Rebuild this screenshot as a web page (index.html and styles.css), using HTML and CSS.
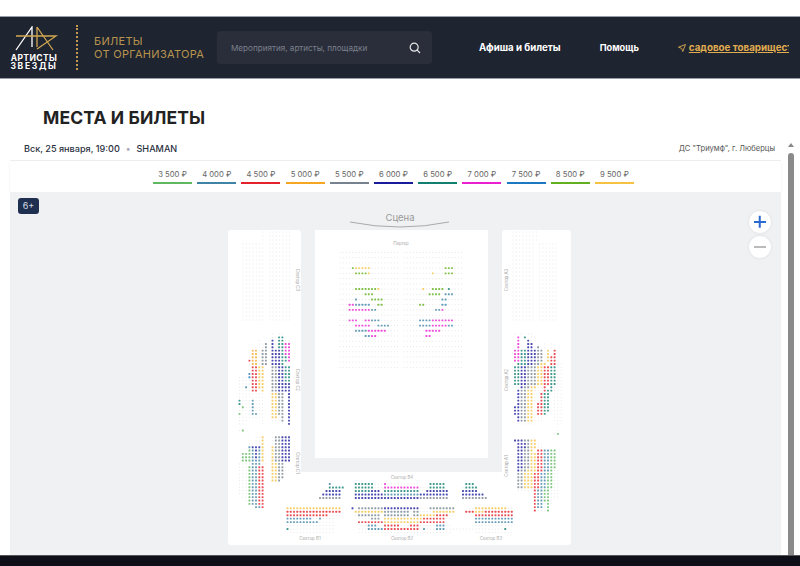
FILE: index.html
```html
<!DOCTYPE html>
<html>
<head>
    <title>Места и билеты</title>
    <link rel="stylesheet" href="styles.css">
</head>
<body>
    <header class="header">
        <div class="logo">
            <svg class="logo-mark" width="44" height="26" viewBox="0 0 44 26">
                <path d="M1 24 L17 1 L17 21" class="logo-white"/>
                <path d="M1 10 H41 L22 23 M22 1 L38 24 M22 1 V21" class="logo-gold"/>
            </svg>
            <div class="logo-text">АРТИСТЫ</div>
            <div class="logo-text logo-text-wide">ЗВЕЗДЫ</div>
        </div>
        <div class="divider"></div>
        <div class="tagline">БИЛЕТЫ<br>ОТ ОРГАНИЗАТОРА</div>
        <div class="search">
            <span>Мероприятия, артисты, площадки</span>
            <svg width="12" height="12" viewBox="0 0 12 12">
                <circle cx="5.2" cy="5.2" r="4" class="icon-line"/>
                <path d="M8.2 8.2 L11 11" class="icon-line"/>
            </svg>
        </div>
        <nav class="nav">
            <a class="nav-posters">Афиша и билеты</a>
            <a class="nav-help">Помощь</a>
        </nav>
        <div class="city">
            <svg width="8" height="8" viewBox="0 0 8 8">
                <path d="M7.5 .5 L.5 3.2 L3.6 4.4 L4.8 7.5 Z" class="icon-gold"/>
            </svg>
            <a>садовое товарищество</a>
        </div>
    </header>

    <h1 class="title">МЕСТА И БИЛЕТЫ</h1>

    <section class="panel">
        <div class="panel-main">
            <div class="event">
                <div class="event-info">
                    <span>Вск, 25 января, 19:00</span>
                    <span class="event-dot">•</span>
                    <span>SHAMAN</span>
                </div>
                <div class="event-place">ДС "Триумф", г. Люберцы</div>
            </div>
            <div class="prices">
                <div class="price price-3500">3 500 ₽</div>
                <div class="price price-4000">4 000 ₽</div>
                <div class="price price-4500">4 500 ₽</div>
                <div class="price price-5000">5 000 ₽</div>
                <div class="price price-5500">5 500 ₽</div>
                <div class="price price-6000">6 000 ₽</div>
                <div class="price price-6500">6 500 ₽</div>
                <div class="price price-7000">7 000 ₽</div>
                <div class="price price-7500">7 500 ₽</div>
                <div class="price price-8500">8 500 ₽</div>
                <div class="price price-9500">9 500 ₽</div>
            </div>
            <div class="map">
                <svg id="hall" class="hall" width="771" height="363" viewBox="10 192 771 363"></svg>
                <div class="age">6+</div>
                <div class="zoom-buttons">
                    <div class="zoom-button zoom-plus"></div>
                    <div class="zoom-button zoom-minus"></div>
                </div>
            </div>
        </div>
        <div class="scrollbar">
            <div class="scroll-arrow"></div>
            <div class="scroll-thumb"></div>
        </div>
    </section>

    <div class="bottom-bar"></div>

    <script src="script.js"></script>
</body>
</html>
```

FILE: styles.css
```css
body {
    margin: 0;
    padding-top: 16px;
    width: 800px;
    height: 550px;
    overflow: hidden;
    background: #fff;
    font-family: Inter, "Liberation Sans", sans-serif;
    color: #222;
}

/* header */
.header {
    display: flex;
    align-items: center;
    height: 61px;
    background: #1f2431;
    border-top: 1px solid #9a9da5;
    border-bottom: 1px solid #9a9da5;
    box-sizing: content-box;
    margin-bottom: 29px;
    overflow: hidden;
}
.logo {
    width: 48px;
    margin-left: 10px;
    text-align: center;
}
.logo-mark {
    display: block;
    margin: 0 0 2px 5px;
}
.logo-white, .logo-gold {
    fill: none;
    stroke-width: 1.3;
}
.logo-white {
    stroke: #fff;
}
.logo-gold {
    stroke: #d0a650;
}
.logo-text {
    font-size: 8.5px;
    line-height: 8px;
    font-weight: 700;
    letter-spacing: .4px;
    color: #fff;
    white-space: nowrap;
}
.logo-text-wide {
    letter-spacing: 1.7px;
}
.divider {
    height: 45px;
    margin-left: 18px;
    border-left: 2px dotted #c39a4e;
}
.tagline {
    margin-left: 16px;
    width: 123px;
    font-size: 11px;
    line-height: 13px;
    color: #b8954f;
    letter-spacing: .3px;
    white-space: nowrap;
}
.search {
    display: flex;
    align-items: center;
    justify-content: space-between;
    width: 215px;
    height: 33px;
    padding: 0 11px 0 14px;
    box-sizing: border-box;
    background: #2a2e3b;
    border-radius: 4px;
    font-size: 8.15px;
    color: #7c808b;
}
.icon-line {
    fill: none;
    stroke: #e6e6e6;
    stroke-width: 1.2;
}
.icon-gold {
    fill: none;
    stroke: #c9a04f;
    stroke-width: 1;
}
.nav {
    display: flex;
    margin-left: 47px;
    font-size: 9.7px;
    font-weight: 700;
    color: #fff;
    white-space: nowrap;
}
.nav-help {
    margin-left: 39px;
    font-size: 9.2px;
}
.city {
    display: flex;
    align-items: center;
    gap: 3px;
    width: 111px;
    margin-left: 39px;
    overflow: hidden;
    font-size: 9.8px;
    font-weight: 700;
    color: #e0ac50;
    white-space: nowrap;
}
.city svg {
    flex: none;
}
.city a {
    text-decoration: underline;
}

.title {
    margin: 1px 0 9px 43px;
    height: 20px;
    font-size: 17.5px;
    line-height: 20px;
    font-weight: 700;
    letter-spacing: .1px;
}

/* seat panel */
.panel {
    display: flex;
    height: 418px;
}
.panel-main {
    width: 771px;
    margin-left: 10px;
}
.event {
    display: flex;
    align-items: center;
    justify-content: space-between;
    height: 23px;
    padding: 0 6px 0 14px;
    border-bottom: 1px solid #eee;
    font-size: 9.1px;
}
.event-dot {
    margin: 0 3.5px;
    color: #aab;
}
.event-info {
    font-weight: 500;
    color: #2a3040;
}
.event-place {
    font-size: 7.6px;
    color: #555;
}
.prices {
    display: flex;
    justify-content: center;
    gap: 5.2px;
    height: 31px;
    padding-right: 4px;
    box-shadow: 0 1px 2px rgba(0, 0, 0, .08);
    position: relative;
}
.price {
    width: 39px;
    height: 15px;
    margin-top: 8px;
    box-sizing: border-box;
    font-size: 7.7px;
    line-height: 12px;
    text-align: center;
    color: #666;
    border-bottom: 2px solid #999;
}
.price-3500 { border-color: #5fb760; }
.price-4000 { border-color: #3f83a5; }
.price-4500 { border-color: #e3222b; }
.price-5000 { border-color: #f5a623; }
.price-5500 { border-color: #76838f; }
.price-6000 { border-color: #1a1a9c; }
.price-6500 { border-color: #128070; }
.price-7000 { border-color: #ea1fd0; }
.price-7500 { border-color: #1c78c0; }
.price-8500 { border-color: #62b01f; }
.price-9500 { border-color: #f5c242; }

.map {
    position: relative;
    height: 363px;
    background: #f0f1f3;
}
.hall {
    display: block;
}
.plate {
    fill: #fff;
}
.stage-line {
    fill: none;
    stroke: #aaa;
    stroke-width: 1;
}
.stage-text {
    font-size: 9.5px;
    fill: #999;
    text-anchor: middle;
}
.sector-text {
    font-size: 4.4px;
    fill: #aaa;
    text-anchor: middle;
}
.age {
    position: absolute;
    left: 8px;
    top: 6px;
    width: 21px;
    height: 16px;
    border-radius: 3px;
    background: #1f2f4f;
    color: #d8dce6;
    font-size: 9px;
    line-height: 16px;
    text-align: center;
}
.zoom-buttons {
    position: absolute;
    left: 739px;
    top: 19px;
    display: flex;
    flex-direction: column;
    gap: 3px;
}
.zoom-button {
    position: relative;
    width: 22px;
    height: 22px;
    border-radius: 50%;
    background: #fff;
    box-shadow: 0 0 3px rgba(0, 0, 0, .1);
}
.zoom-button::before, .zoom-plus::after {
    content: "";
    position: absolute;
    left: 5px;
    top: 10px;
    width: 12px;
    height: 1.5px;
    background: #2a6ad0;
}
.zoom-plus::after {
    transform: rotate(90deg);
}
.zoom-minus::before {
    background: #bbb;
}

.scrollbar {
    width: 19px;
    display: flex;
    flex-direction: column;
    align-items: center;
}
.scroll-arrow {
    margin-top: 6px;
    border-left: 3px solid transparent;
    border-right: 3px solid transparent;
    border-bottom: 4px solid #888;
}
.scroll-thumb {
    width: 6px;
    height: 402px;
    margin-top: 6px;
    border-radius: 3px 3px 0 0;
    background: #8a8a8a;
}

.bottom-bar {
    height: 11px;
    background: #0e0f18;
    border-top: 1px solid #555;
    box-sizing: border-box;
}
```

FILE: script.js
```js
const colors = {
    '.': '#e8e8e8',
    a: '#5fb760',
    b: '#3f83a5',
    c: '#e3222b',
    d: '#f5a623',
    e: '#76838f',
    f: '#1a1a9c',
    g: '#128070',
    h: '#ea1fd0',
    i: '#1c78c0',
    j: '#62b01f',
    k: '#f5c242'
};

// rows are lists of runs: colour letter + column range, later runs paint over earlier ones
const sectors = [
    // партер
    { x: 340, y: 252.5, dx: 3.2, dy: 5.22, base: '.0-18 .20-38', rows: {
        3: 'j4 k5-9 j33-35',
        4: 'j5-8 k9 k29 j33-35',
        7: 'j5-11 k12 k26 j29-32 g34',
        8: 'j8-10 j28-31 b33-35',
        9: 'b5 j10-13 b32-33',
        10: 'h3-4 b5-9 j12-13 j25-26 b32-33',
        11: 'h3-9 b10-11 b30-31 h32',
        13: 'h3-5 h8-9 b10-12 b25-28 h29-35',
        14: 'h5-9 b12-15 b25-28 h29-33 b34-35',
        15: 'b5-8 h9-14 h27-31',
        16: 'b8-9 h10-11 h27-28'
    }, count: 23 },

    // левая сторона, верх
    { x: 243, y: 232, dx: 3.33, dy: 4, base: '.0-6 .8-14', top: { until: 3, base: '.6 .8-14' }, rows: {}, count: 23 },
    // правая сторона, верх
    { x: 513, y: 232, dx: 3.33, dy: 4, base: '.0-6 .8-13', top: { until: 3, base: '.0-7' }, rows: {}, count: 23 },

    // левая сторона, низ
    { x: 239.5, y: 334, dx: 3.3, dy: 3.33, base: '', rows: {
        0: '.10 .12-13',
        1: '.10-11 g12-13 .14',
        2: '.6 f10 .11 g12-13 .14-15',
        3: '.6-7 e8 f10 .11 g12-13 h14-15',
        4: '.5-7 e8 f10 .11 g12-13 h14-15',
        5: 'd4-5 .6 e7-8 f10-12 g13 h14-15',
        6: 'd4-5 .6 e7-8 f10-12 g13 h14-15',
        7: '.3 d4-5 .6 e7-8 f10-12 g13-14 h15',
        8: 'c3 d4-5 .6 e7-8 f10-12 g13-14 h15',
        9: '.3 d4-5 .6 e7-8 f10-12 g13',
        10: 'c4-5 k6-7 e10-11 f12-13 g14-15',
        11: 'c4-5 k6-7 e10-11 f12-13 g14-15',
        12: 'b3 c4-5 k6-7 e10-11 f12-13 g14-15',
        13: '.0-2 i3 c4-5 k6-7 e10-11 f12-13 g14-15',
        14: '.0-2 c4-5 k6-7 e10-11 f12-13 g14-15',
        15: '.0-3 c4-5 k6-7 e10-11 f12-15',
        16: '.0-1 b2 c4-5 k6-7 e10-11 f12-15',
        17: '.0-3 c4-5 k7 e10-11 f12-15',
        18: '.0-7 k10-11 e12-13 f15',
        19: '.0-7 k10-11 e12-13 f15',
        20: 'g0 .1-3 b4 .5-7 k10-11 e12-13 f15',
        21: 'g0 .1-3 b4 .5-7 k10-11 e12-13 f15',
        22: '.0 a1 .2-3 b4 .5-7 k10-11 e12-13 f15',
        23: '.0-3 b4 .5-7 k10-11 e12-13 f15',
        24: 'a0 .1-3 b4-5 .6-7 k10-11 e12-13 f15',
        25: '.0-7 k10-11 .12 e13 f15',
        26: '.0-2 .7 .10-12 e13 f15',
        27: '.0-1 .7 .13 f15',
        29: '.0 a1',
        31: '.5-6 k7 .10 e11-12 f13-15',
        32: '.5-6 k7 .10 e11-12 f13-15',
        33: '.3-6 k7 .10 e11-12 f13-15',
        34: 'b3 f4-6 k7 k10 e11-12 f13-15',
        35: 'a3 b4 f5 b6 k7 k10 e11-12 f13-15',
        36: 'a1-3 b4 f5 b6 k7 k10 e11-12 f13-15',
        37: 'a1-3 b4 f5 b6 k7 k10 e11-12 f13-15',
        38: 'a1-3 b4-6 k7 k10 e11-12 f13-15',
        39: '.0-2 .3 b4-6 .7-8 k10-11 e12-13',
        40: '.0-2 a3 b4-5 c6-7 k10-11 e12-13 .14',
        41: '.0-2 a3 b4-5 c6-7 k10-11 e12-13 .14',
        42: '.0-2 a3 b4-5 c6-7 k10-11 e12-13 .14',
        43: '.0-2 a3 b4-5 c6-7 k10-11 e12-13',
        44: '.0-2 a3 b4-5 c6-7 k10-11 e12',
        45: '.0-2 a3 b4-5 c6-7',
        46: '.0-2 a3 b4-5 c6-7',
        47: '.0-2 a3 b4-5 c6-7',
        48: '.0-2 a3 b4-5 c6-7',
        49: '.1-2 a3 b4-5 c6-7',
        50: '.2 a3 b4-5 c6-7',
        51: '.3 a3 b4-5 c6-7',
        52: 'b5-6 c7'
    } },

    // правая сторона, низ
    { x: 515, y: 334, dx: 3.3, dy: 3.33, base: '', rows: {
        0: '.0 .2 .4-5',
        1: 'h1 g3 .5-6',
        2: 'h1 f4 .5-6',
        3: 'h1 f4-5 .7 .9 .11',
        4: 'h1 f4-5 .6 e7 .9 .11',
        5: 'h0-1 g2-3 f4-6 e7-8 k10 c12',
        6: 'h0-1 g2-3 f4-6 e7-8 k10 c12',
        7: 'h0-1 g2-3 f4-6 e7-8 k10 c11-12',
        8: 'h0-1 g2-3 f4-6 e7-8 k10 c11-12',
        9: 'g1-3 f4-5 e6-7 k8-9 c11-12 .13-14',
        10: 'g0-1 f2-3 e4-6 k7-8 c9-10 g11-12 .13-14',
        11: 'g0-1 f2-3 e4-6 k7-8 c9-10 g11-12 .13-14',
        12: 'g0-1 f2-3 e4-6 k7-8 c9-10 g11-12 .13-14',
        13: 'g0-1 f2-3 e4-6 k7-8 c9-10 g11-12 .13-14',
        14: 'g0-1 f2-3 e4-6 k7-8 c9-10 g11-12 .13-14',
        15: 'g0-1 f2-3 e4-6 k7-8 c9-10 g11-12 .13-14',
        16: '.1 f2 e3-4 k5-6 .7-8 c9 g11 .12-14',
        17: '.1 f1 e2-3 k4-5 .6-8 c9 g10-11 .12-14',
        18: 'f1 e2-3 k4-5 .6-8 c8 g9-10 .12-14',
        19: 'f1 e2-3 k4-5 .6-8 c8 g9-10 .12-14',
        20: 'f1 e2-3 k4-5 .6-8 c8 g9-10 .12-14',
        21: 'f1 e2-3 k4-5 c7-8 g9-10 .12-14',
        22: 'f0-1 e2-3 k4-5 c7-8 g9-10 .12-14',
        23: 'f0-1 e2-3 k4-5 c7-8 g9-10 .12-14',
        24: 'f0-1 e2-3 k4-5 c7-8 g9 .12-14',
        25: 'f1 e2-3 k4-5 .6-8 .12-14',
        26: 'f1 e2-3 k4-5 .6-8 .12-14',
        27: '.1-5 .13-14',
        29: '.13',
        30: 'a13 .12',
        32: 'f0 .1 f1-2 e3-4 k5-6',
        33: 'f1-3 e4 k5-6 .7-8',
        34: 'f1-3 e4 k5-6 .7-8',
        35: 'f1-2 e3-4 k5 c7-8 b9-10 a11-12',
        36: 'f1-2 e3-4 k5-6 c7-8 b9-10 a11-12',
        37: 'f1-2 e3-4 k5-6 c7-8 b9-10 a11-12',
        38: 'f1-2 e3-4 k5-6 c7-8 b9-10 a11-12',
        39: 'f1-2 e3-4 k5-6 c7-8 b9-10 a11-12',
        40: 'f1-2 e3-4 k5-6 c7-8 b9-10 a11-12',
        41: 'f1 e2-3 k4-6 c7-8 b9-10 a11 .12-13',
        42: 'e1-2 k3-5 c6-7 b8-9 a10-11 .12-13',
        43: 'e1-2 k3-5 c6-7 b8-9 a10-11 .12-13',
        44: 'e1-2 k3-5 c6-7 b8-9 a10-11 .12-13',
        45: 'e1-2 k3-5 c6-7 b8-9 a10-11 .12-13',
        46: 'e1-2 k3-5 c6-7 b8-9 a10-11 .12-13',
        47: '.1-5 c6 b7-8 a9-10 .11-13',
        48: 'c6 b7-8 a9-10 .11-13',
        49: 'c6 b7-8 a9-10 .11-13',
        50: 'c6 b7-8 a9-10 .11',
        51: 'c6 b7-8 .9 a10 .11',
        52: 'c6 b7-8 .9 a10',
        53: 'c6 .7-9 a10'
    } },

    // сектор В4
    { x: 287.5, y: 484, dx: 3.25, dy: 3.5, base: '', rows: {
        0: 'b13 g21-26 .27-29 h30 .31-40 g44-48 g55-57',
        1: 'g13-17 g21-26 .27-29 h30-40 .41-43 g44-48 .54 g55-58',
        2: 'f12-16 g21-25 f26-28 g30-40 f43-49 f54-58',
        3: 'f11-16 f21-29 b30-40 f41-49 f54-60',
        4: 'e10-16 f21-29 f30-40 e41-49 e54-61'
    } },

    // секторы В1, В2, В3
    { x: 287.5, y: 508.3, dx: 3.25, dy: 3.45, base: '', rows: {
        0: 'k0-16 f20 .21 e22-29 f30-40 .41-43 e44-51 .56-57 k58-67 .68-69',
        1: 'c0-16 k21-29 e30-37 .38 e39-40 .41-44 k45-51 c55-57 k58-60 c61-69',
        2: 'c0-12 .13-16 .21 e22-28 e30-37 .38 e39-40 k41-45 c46-49 .50-51 c58-69',
        3: 'b0-7 .8-9 b10 .11-14 .22-25 e26-28 k30-41 c42-48 .49-50 b58-69',
        4: 'b0-9 .10-14 c22-29 k30-40 c41-48 .49 b58-69',
        5: '.0-14 .23-24 b25-27 .28-29 c30-34 .35-37 c38-40 .41-45 b46-48 .49-50 .58-69',
        6: 'g0 .1-14 .22-24 b25-29 c30-40 .41 b42 .43-45 b46-48 .49-52 .53-66 g67',
        7: '.1-14 .22-50 .58-68'
    } }
];

const labels = [
    ['Партер', 401, 245, 0],
    ['Сектор С3', 296, 280, 90],
    ['Сектор С2', 296, 380, 90],
    ['Сектор С1', 296, 463, 90],
    ['Сектор А3', 508, 280, -90],
    ['Сектор А2', 508, 380, -90],
    ['Сектор А1', 508, 466, -90],
    ['Сектор В4', 402, 479, 0],
    ['Сектор В1', 310, 540, 0],
    ['Сектор В2', 402, 540, 0],
    ['Сектор В3', 491, 540, 0]
];

const hall = document.getElementById('hall');
const ns = 'http://www.w3.org/2000/svg';

function add(tag, attrs, text) {
    const el = document.createElementNS(ns, tag);
    for (const key in attrs) el.setAttribute(key, attrs[key]);
    if (text) el.textContent = text;
    hall.appendChild(el);
}

function paintRow(cells, spec) {
    spec.split(' ').filter(Boolean).forEach(function (run) {
        const range = run.slice(1).split('-').map(Number);
        const end = range.length > 1 ? range[1] : range[0];
        for (let c = range[0]; c <= end; c++) cells[c] = run[0];
    });
}

add('path', { class: 'plate', d: 'M231 230 H298 Q301 230 301 233 V472 H502 V233 Q502 230 505 230 H568 Q571 230 571 233 V542 Q571 545 568 545 H231 Q228 545 228 542 V233 Q228 230 231 230 Z' });
add('path', { class: 'plate', d: 'M315 230 H488 V458 H315 Z' });
add('path', { class: 'stage-line', d: 'M350 222 Q400 232 449 222' });
add('text', { class: 'stage-text', x: 400, y: 221 }, 'Сцена');

sectors.forEach(function (s) {
    const rowNums = Object.keys(s.rows).map(Number);
    const count = s.count || Math.max.apply(null, rowNums) + 1;
    for (let r = 0; r < count; r++) {
        const cells = {};
        const base = s.top && r < s.top.until ? s.top.base : s.base;
        paintRow(cells, base);
        paintRow(cells, s.rows[r] || '');
        for (const c in cells) {
            const free = cells[c] === '.';
            const size = free ? 1 : 1.9;
            add('rect', {
                x: s.x + c * s.dx - size / 2,
                y: s.y + r * s.dy - size / 2,
                width: size,
                height: size,
                rx: free ? 0 : 0.5,
                fill: colors[cells[c]],
                opacity: free ? 1 : 0.8
            });
        }
    }
});

labels.forEach(function (l) {
    add('text', {
        class: 'sector-text',
        x: l[1],
        y: l[2],
        transform: 'rotate(' + l[3] + ' ' + l[1] + ' ' + l[2] + ')'
    }, l[0]);
});
```
